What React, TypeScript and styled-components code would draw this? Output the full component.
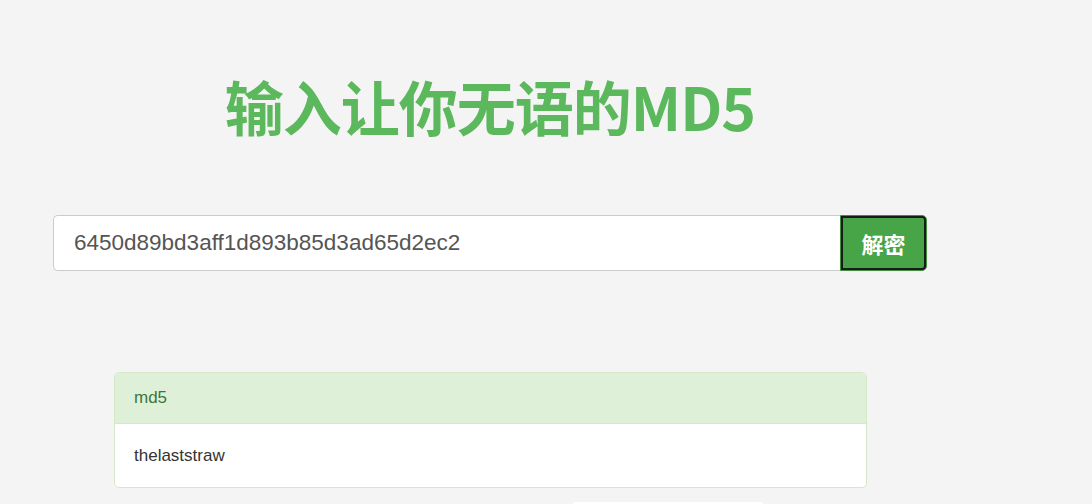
import React, { useState } from 'react';
import styled, { createGlobalStyle } from 'styled-components';

const GlobalStyle = createGlobalStyle`
  html, body {
    margin: 0;
    padding: 0;
    background: #f4f4f4;
    font-family: "Liberation Sans", Arial, "Noto Sans CJK SC", sans-serif;
    color: #333;
  }
`;

const Page = styled.div`
  width: 980px;
  padding-top: 66px;
`;

const Title = styled.h1`
  margin: 0;
  text-align: center;
  font-family: "Noto Sans CJK SC", "Noto Sans", sans-serif;
  font-weight: 700;
  font-size: 59px;
  line-height: 80px;
  letter-spacing: -1px;
  color: #5cb85c;
`;

const SearchForm = styled.form`
  display: flex;
  margin: 69px 53px 0;
  height: 56px;
`;

const HashInput = styled.input`
  flex: 1;
  min-width: 0;
  box-sizing: border-box;
  height: 56px;
  padding: 0 20px;
  border: 1px solid #ccc;
  border-right: none;
  border-radius: 5px 0 0 5px;
  background: #fff;
  color: #555;
  font-family: "Liberation Sans", Arial, sans-serif;
  font-size: 22.5px;
  outline: none;
`;

const DecryptButton = styled.button`
  width: 87px;
  height: 56px;
  box-sizing: border-box;
  border: 1px solid #3e8f3e;
  border-radius: 0 5px 5px 0;
  background: #47a447;
  color: #fff;
  font-family: "Noto Sans CJK SC", sans-serif;
  font-weight: 700;
  font-size: 22px;
  outline: 2px solid #1a1a1a;
  outline-offset: -3px;
  cursor: pointer;
`;

const ResultPanel = styled.div`
  margin: 101px 113px 0 114px;
  border: 1px solid #d6e9c6;
  border-radius: 5px;
  background: #fff;
  overflow: hidden;
`;

const PanelHeading = styled.div`
  padding: 12px 19px;
  line-height: 26px;
  background: #dff0d8;
  border-bottom: 1px solid #d6e9c6;
  color: #3c763d;
  font-size: 17px;
`;

const PanelBody = styled.div`
  padding: 18px 19px;
  line-height: 27px;
  font-size: 17px;
  color: #333;
`;

const Footer = styled.div`
  margin: 14px 0 0 573px;
  width: 190px;
  height: 20px;
  background: #fff;
  border-radius: 3px 3px 0 0;
`;

export default function App() {
  const [hash, setHash] = useState('6450d89bd3aff1d893b85d3ad65d2ec2');

  return (
    <>
      <GlobalStyle />
      <Page>
        <Title>输入让你无语的MD5</Title>
        <SearchForm onSubmit={(e) => e.preventDefault()}>
          <HashInput value={hash} onChange={(e) => setHash(e.target.value)} />
          <DecryptButton type="submit">解密</DecryptButton>
        </SearchForm>
        <ResultPanel>
          <PanelHeading>md5</PanelHeading>
          <PanelBody>thelaststraw</PanelBody>
        </ResultPanel>
        <Footer />
      </Page>
    </>
  );
}
